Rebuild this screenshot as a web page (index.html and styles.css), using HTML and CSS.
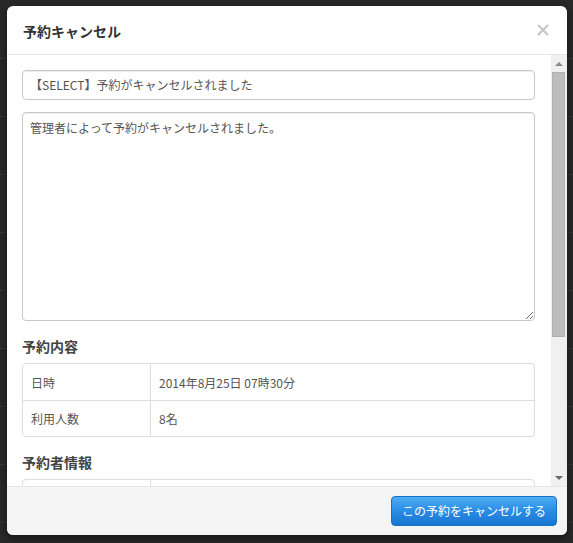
FILE: index.html
```html
<!DOCTYPE html>
<html lang="ja">
<head>
<meta charset="utf-8">
<title>予約キャンセル</title>
<link rel="stylesheet" href="styles.css">
</head>
<body>
<div class="modal">
  <div class="modal-header">
    <h4 class="modal-title">予約キャンセル</h4>
    <span class="close" aria-label="閉じる">
      <svg width="12" height="12" viewBox="0 0 12 12"><path d="M1 1L11 11M11 1L1 11" stroke="#c4c4c4" stroke-width="2" fill="none"/></svg>
    </span>
  </div>
  <div class="modal-body">
    <div class="scroll-content">
      <div class="input">【SELECT】予約がキャンセルされました</div>
      <textarea class="textarea">管理者によって予約がキャンセルされました。</textarea>
      <h5 class="section-title">予約内容</h5>
      <table class="info">
        <tr><th>日時</th><td>2014年8月25日 07時30分</td></tr>
        <tr><th>利用人数</th><td>8名</td></tr>
      </table>
      <h5 class="section-title">予約者情報</h5>
      <table class="info">
        <tr><th>&nbsp;</th><td>&nbsp;</td></tr>
        <tr><th>&nbsp;</th><td>&nbsp;</td></tr>
      </table>
    </div>
    <div class="scrollbar">
      <div class="sb-btn"><span class="arrow-up"></span></div>
      <div class="sb-track"><div class="sb-thumb"></div></div>
      <div class="sb-btn"><span class="arrow-down"></span></div>
    </div>
  </div>
  <div class="modal-footer">
    <button class="btn-primary">この予約をキャンセルする</button>
  </div>
</div>
</body>
</html>
```

FILE: styles.css
```css
* { box-sizing: border-box; }
html, body { margin: 0; padding: 0; }
body {
  width: 573px;
  height: 543px;
  overflow: hidden;
  background-color: #292929;
  background-image: repeating-linear-gradient(to bottom, transparent 0, transparent 57px, #363636 57px, #363636 58px);
  background-position: 0 1px;
  font-family: "Noto Sans CJK JP", "Liberation Sans", sans-serif;
  font-size: 12px;
  color: #555;
  padding: 6px 0 0 7px;
}
.modal {
  width: 560px;
  height: 529px;
  background: #fff;
  border-radius: 6px;
  display: flex;
  flex-direction: column;
  overflow: hidden;
  box-shadow: 0 3px 9px rgba(0,0,0,0.5);
}
.modal-header {
  height: 49px;
  flex: 0 0 49px;
  border-bottom: 1px solid #e5e5e5;
  display: flex;
  align-items: center;
  justify-content: space-between;
  padding: 0 18px 0 16px;
}
.modal-title {
  margin: 0;
  font-size: 14px;
  font-weight: bold;
  color: #333;
  line-height: 20px;
  padding-top: 1px;
}
.close { display: flex; margin-top: 0; }
.modal-body {
  flex: 0 0 431px;
  height: 431px;
  display: flex;
  background: #fff;
}
.scroll-content {
  flex: 1;
  overflow: hidden;
  padding: 15px 16px 0 15px;
}
.input {
  height: 30px;
  border: 1px solid #c8c8c8;
  border-radius: 4px;
  padding: 0 7px;
  line-height: 28px;
  color: #555;
  box-shadow: inset 0 1px 1px rgba(0,0,0,0.075);
}
.textarea {
  display: block;
  width: 100%;
  height: 209px;
  margin: 12px 0 0;
  border: 1px solid #c8c8c8;
  border-radius: 4px;
  padding: 5px 7px;
  font: inherit;
  font-size: 12px;
  line-height: 20px;
  color: #555;
  resize: vertical;
  box-shadow: inset 0 1px 1px rgba(0,0,0,0.075);
  outline: none;
}
.section-title {
  margin: 15px 0 7px;
  font-size: 14px;
  font-weight: bold;
  color: #444;
  line-height: 20px;
}
.info {
  width: 100%;
  border-collapse: separate;
  border-spacing: 0;
  border: 1px solid #ddd;
  border-radius: 4px;
}
.info th, .info td {
  height: 36px;
  padding: 0 8px;
  text-align: left;
  font-weight: normal;
  color: #555;
  vertical-align: middle;
}
.info th {
  width: 128px;
  border-right: 1px solid #ddd;
}
.info tr + tr th, .info tr + tr td { border-top: 1px solid #ddd; }
.scrollbar {
  flex: 0 0 16px;
  width: 16px;
  background: #f0f0f0;
  display: flex;
  flex-direction: column;
}
.sb-btn {
  height: 17px;
  flex: 0 0 17px;
  display: flex;
  align-items: center;
  justify-content: center;
  padding-right: 1px;
}
.arrow-up, .arrow-down {
  width: 0;
  height: 0;
  border-left: 4px solid transparent;
  border-right: 4px solid transparent;
}
.arrow-up { border-bottom: 4px solid #8a8a8a; }
.arrow-down { border-top: 4px solid #6a6a6a; }
.sb-track {
  flex: 1;
  padding: 0 2px 0 1px;
}
.sb-thumb {
  height: 265px;
  background: #bdbdbd;
  border: 1px solid #b0b0b0;
}
.modal-footer {
  flex: 1;
  background: #f5f5f5;
  border-top: 1px solid #e5e5e5;
  display: flex;
  align-items: center;
  justify-content: flex-end;
  padding: 0 10px 1px;
}
.btn-primary {
  height: 30px;
  padding: 0 10px;
  border: 1px solid #1a6fc4;
  border-radius: 4px;
  background: linear-gradient(to bottom, #4badf3 0%, #2a8ce3 50%, #1776d4 100%);
  color: #fff;
  font-family: "Noto Sans CJK JP", "Liberation Sans", sans-serif;
  font-size: 12px;
  line-height: 28px;
  cursor: pointer;
}
```
